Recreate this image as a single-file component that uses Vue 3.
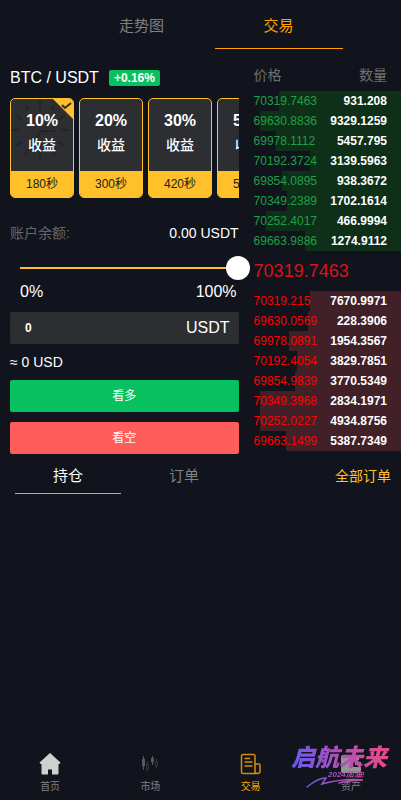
<template>
  <div class="page">
    <!-- Top tabs -->
    <nav class="top-tabs">
      <button
        v-for="tab in topTabs"
        :key="tab"
        class="top-tab"
        :class="{ active: tab === activeTop }"
        @click="activeTop = tab"
      >
        {{ tab }}
      </button>
    </nav>

    <main class="trade">
      <!-- Order form -->
      <section class="order">
        <div class="pair">
          <h1 class="pair-name">BTC / USDT</h1>
          <span class="change">+0.16%</span>
        </div>

        <div class="periods">
          <button
            v-for="(p, i) in periods"
            :key="p.rate"
            class="period"
            @click="activePeriod = i"
          >
            <svg v-if="i === activePeriod" class="clock" viewBox="0 0 62 72" aria-hidden="true">
              <path
                d="M29 2v8M29 52v9M1 31h6M51 31h7M6 17l4 3M6 46l5-3M15 7l2 4M14 55l3-5M43 7l-2 4M44 55l-3-5M53 17l-4 3M53 46l-5-3M43 32H30L23 43"
                fill="none"
                stroke="#232428"
                stroke-width="2"
                stroke-linecap="round"
              />
            </svg>
            <svg v-if="i === activePeriod" class="tick" viewBox="0 0 20 20" aria-hidden="true">
              <path d="M0 0h20v20z" fill="#ffc029" />
              <path d="M9 6l3 3 6-5" fill="none" stroke="#2d2e32" stroke-width="2" />
            </svg>
            <strong class="rate">{{ p.rate }}</strong>
            <span class="gain">收益</span>
            <span class="seconds">{{ p.seconds }}秒</span>
          </button>
        </div>

        <div class="balance">
          <span class="muted">账户余额:</span>
          <span>0.00 USDT</span>
        </div>

        <input v-model="percent" class="slider" type="range" min="0" max="100" aria-label="仓位比例" />
        <div class="scale">
          <span>0%</span>
          <span>100%</span>
        </div>

        <label class="amount">
          <input v-model="amount" class="amount-input" type="text" inputmode="decimal" />
          <span>USDT</span>
        </label>
        <p class="approx">≈ {{ amount }} USD</p>

        <button class="btn up">看多</button>
        <button class="btn down">看空</button>
      </section>

      <!-- Order book -->
      <section class="book">
        <table class="book-table">
          <thead>
            <tr class="book-head">
              <th>价格</th>
              <th>数量</th>
            </tr>
          </thead>
          <tbody class="bids">
            <tr v-for="row in bids" :key="row.price" class="book-row">
              <td class="price">{{ row.price }}</td>
              <td class="qty">
                {{ row.qty }}
                <span class="depth" :style="{ width: row.depth + '%' }"></span>
              </td>
            </tr>
          </tbody>
          <tbody>
            <tr class="last-price">
              <td colspan="2">70319.7463</td>
            </tr>
          </tbody>
          <tbody class="asks">
            <tr v-for="row in asks" :key="row.price" class="book-row">
              <td class="price">{{ row.price }}</td>
              <td class="qty">
                {{ row.qty }}
                <span class="depth" :style="{ width: row.depth + '%' }"></span>
              </td>
            </tr>
          </tbody>
        </table>
      </section>
    </main>

    <!-- Positions / orders -->
    <div class="list-tabs">
      <button
        v-for="tab in listTabs"
        :key="tab"
        class="list-tab"
        :class="{ active: tab === activeList }"
        @click="activeList = tab"
      >
        {{ tab }}
      </button>
      <a href="#" class="all-orders">全部订单</a>
    </div>

    <!-- Bottom nav -->
    <nav class="tabbar">
      <a href="#" class="tabbar-item">
        <svg viewBox="0 0 24 24" aria-hidden="true">
          <path
            d="M12 1l-10.500 9.500 1 1.500h1v9.500q0 1 1 1h5.500v-5h4v5h5.500q1 0 1-1v-9.500h1l1-1.500z"
            fill="#d0d0d0"
          />
        </svg>
        <span>首页</span>
      </a>
      <a href="#" class="tabbar-item">
        <svg viewBox="0 0 24 24" aria-hidden="true">
          <g stroke="#55585c" fill="#55585c">
            <path d="M5.500 4v14M14.500 4v9" />
            <path d="M4.500 7h2v7h-2zM13.500 6h2v4h-2z" />
          </g>
          <path d="M9.500 9v3M8.500 12h2v5h-2zM9.500 17v2M18.500 7v3M17.500 10h2v4h-2zM18.500 14v2" fill="none" stroke="#34373d" />
        </svg>
        <span>市场</span>
      </a>
      <a href="#" class="tabbar-item active">
        <svg viewBox="0 0 24 24" aria-hidden="true">
          <path
            d="M16 21.500H4q-1.500 0-1.500-1.500V4q0-1.500 1.500-1.500h10.500q1.500 0 1.500 1.500v15.500q0 2 2.500 2t2.500-2v-6.500q0-1-1-1h-4M6 6.500h4.500M6 10h7M6 14h7M15 21.500h3.500"
            fill="none"
            stroke="#d28c0c"
            stroke-width="1.500"
            stroke-linecap="round"
          />
        </svg>
        <span>交易</span>
      </a>
      <a href="#" class="tabbar-item">
        <svg viewBox="0 0 24 24" aria-hidden="true">
          <path
            d="M4 3h14q2 0 2 2v3h-4q-3 0-3 3.500t3 3.500h6v4q0 2-2 2H4q-2 0-2-2V5q0-2 2-2zM16 10h6v3h-6z"
            fill="#969696"
          />
        </svg>
        <span>资产</span>
      </a>
    </nav>

    <!-- Campaign watermark -->
    <svg class="stamp" viewBox="0 0 104 58" aria-hidden="true">
      <defs>
        <linearGradient id="ink" gradientUnits="userSpaceOnUse" x1="0" y1="40" x2="104" y2="16">
          <stop offset="0" stop-color="#5a5cf4" />
          <stop offset="0.500" stop-color="#b050b8" />
          <stop offset="1" stop-color="#f04a80" />
        </linearGradient>
      </defs>
      <path
        d="M18 52q11-9 19-9l-4 6q22-6 41-4-11 0-24 3"
        fill="none"
        stroke="url(#ink)"
        stroke-width="1.500"
        stroke-linecap="round"
      />
      <text class="stamp-title" x="2" y="31" fill="url(#ink)">启航未来</text>
      <text class="stamp-text" x="39" y="42" fill="url(#ink)">2024加油!</text>
    </svg>
  </div>
</template>

<script setup>
import { ref } from "vue";

const topTabs = ["走势图", "交易"];
const activeTop = ref("交易");

const listTabs = ["持仓", "订单"];
const activeList = ref("持仓");

const periods = [
  { rate: "10%", seconds: 180 },
  { rate: "20%", seconds: 300 },
  { rate: "30%", seconds: 420 },
  { rate: "50%", seconds: 540 },
];
const activePeriod = ref(0);

const percent = ref(100);
const amount = ref("0");

const bids = [
  { price: "70319.7463", qty: "931.208", depth: 76 },
  { price: "69630.8836", qty: "9329.1259", depth: 88 },
  { price: "69978.1112", qty: "5457.795", depth: 78 },
  { price: "70192.3724", qty: "3139.5963", depth: 57 },
  { price: "69854.0895", qty: "938.3672", depth: 74 },
  { price: "70349.2389", qty: "1702.1614", depth: 71 },
  { price: "70252.4017", qty: "466.9994", depth: 84 },
  { price: "69663.9886", qty: "1274.9112", depth: 60 },
];

const asks = [
  { price: "70319.215", qty: "7670.9971", depth: 57 },
  { price: "69630.0569", qty: "228.3906", depth: 58 },
  { price: "69978.0891", qty: "1954.3567", depth: 70 },
  { price: "70192.4054", qty: "3829.7851", depth: 65 },
  { price: "69854.9839", qty: "3770.5349", depth: 66 },
  { price: "70349.3968", qty: "2834.1971", depth: 88 },
  { price: "70252.0227", qty: "4934.8756", depth: 88 },
  { price: "69663.1499", qty: "5387.7349", depth: 72 },
];
</script>

<style>
body {
  background: #11141d;
}
</style>

<style scoped>
.page {
  min-height: 100vh;
  box-sizing: border-box;
  padding-bottom: 60px;
  background: #11141d;
  color: #fff;
  font-family: "Liberation Sans", "Noto Sans CJK SC", sans-serif;
  font-size: 14px;
  line-height: 20px;
}

button {
  font-family: inherit;
  border: none;
  padding: 0;
  background: none;
  color: inherit;
  cursor: pointer;
}

a {
  text-decoration: none;
}

/* Top tabs */
.top-tabs {
  display: flex;
  justify-content: center;
  gap: 9px;
  padding: 0 58px 0 77px;
}
.top-tab {
  flex: 0 1 128px;
  height: 49px;
  font-size: 15px;
  color: #808080;
  border-bottom: 1px solid transparent;
}
.top-tab.active {
  color: #ffa500;
  border-color: #ffa500;
}

/* Trade area */
.trade {
  display: flex;
  padding-top: 16px;
}
.order {
  width: 60%;
  box-sizing: border-box;
  padding: 0 2px 0 10px;
}
.book {
  position: relative;
  z-index: 0;
  width: 40%;
}

.pair {
  display: flex;
  align-items: center;
  gap: 10px;
  height: 26px;
}
.pair-name {
  margin: 0;
  font-size: 16px;
  font-weight: 400;
}
.change {
  padding: 0 5px;
  border-radius: 2px;
  background: #07c160;
  font-size: 12px;
  font-weight: 700;
  line-height: 16px;
}

/* Period cards */
.periods {
  display: flex;
  gap: 5px;
  margin-top: 7px;
  overflow: hidden;
}
.period {
  position: relative;
  flex: 0 0 64px;
  height: 100px;
  box-sizing: border-box;
  display: flex;
  flex-direction: column;
  align-items: center;
  border: 1px solid #ffc029;
  border-radius: 5px;
  background: #2d2e32;
  overflow: hidden;
}
.clock {
  position: absolute;
  top: 0;
  left: 0;
  width: 62px;
  height: 72px;
}
.tick {
  position: absolute;
  top: 0;
  right: 0;
  width: 20px;
  height: 20px;
}
.rate {
  position: relative;
  margin-top: 9px;
  font-size: 16px;
  line-height: 25px;
}
.gain {
  position: relative;
  font-size: 14px;
  font-weight: 500;
  line-height: 25px;
}
.seconds {
  width: 100%;
  margin-top: auto;
  background: #ffc029;
  color: #222;
  font-size: 12px;
  line-height: 26px;
}

/* Balance and amount */
.balance {
  display: flex;
  justify-content: space-between;
  margin-top: 25px;
}
.muted {
  color: #666;
}
.slider {
  position: relative;
  z-index: 1;
  display: block;
  appearance: none;
  width: calc(100% + 13px);
  height: 24px;
  margin: 13px 0 0 -2px;
  background: linear-gradient(#ffc029, #ffc029) center / calc(100% - 24px) 2px no-repeat;
}
.slider::-webkit-slider-thumb {
  appearance: none;
  width: 24px;
  height: 24px;
  border-radius: 50%;
  background: #fff;
}
.scale {
  display: flex;
  justify-content: space-between;
  padding: 2px 2px 0 10px;
  font-size: 16px;
}
.amount {
  display: flex;
  align-items: center;
  height: 32px;
  margin-top: 10px;
  padding: 0 9px 0 15px;
  border-radius: 2px;
  background: #2d2e32;
  font-size: 16px;
}
.amount-input {
  flex: 1;
  min-width: 0;
  padding: 0;
  border: none;
  outline: none;
  background: none;
  color: #fff;
  font-family: inherit;
  font-size: 12px;
  font-weight: 700;
}
.approx {
  margin: 8px 0;
}
.btn {
  display: block;
  width: 100%;
  height: 32px;
  padding-bottom: 4px;
  border-radius: 2px;
  color: #fff;
  font-size: 12px;
}
.btn + .btn {
  margin-top: 10px;
}
.up {
  background: #07c160;
}
.down {
  background: #ff5c5c;
}

/* Order book */
.book-table {
  width: 100%;
  border-collapse: collapse;
  font-size: 12px;
}
.book-head th {
  height: 26px;
  padding: 0 14px 0 13px;
  color: #707070;
  font-size: 14px;
  font-weight: 400;
  line-height: 20px;
  text-align: left;
  vertical-align: top;
}
.book-head th:last-child {
  text-align: right;
}
.book-row {
  position: relative;
}
.book-row td {
  height: 20px;
  padding: 0 14px 0 13px;
}
.book-row .price {
  padding-right: 0;
}
.book-row .qty {
  padding-left: 0;
  font-weight: 700;
  text-align: right;
}
.depth {
  position: absolute;
  top: 0;
  right: 0;
  bottom: 0;
  z-index: -1;
}
.bids .price {
  color: #1fa045;
}
.bids .depth {
  background: #0f3018;
}
.asks .price {
  color: #f00;
}
.asks .depth {
  background: #422028;
}
.last-price td {
  height: 40px;
  padding: 0 13px;
  color: #d8131a;
  font-size: 18px;
}

/* Positions / orders */
.list-tabs {
  display: flex;
  align-items: center;
  gap: 10px;
  margin-top: 5px;
  padding: 0 10px 0 15px;
}
.list-tab {
  flex: 0 1 106px;
  height: 35px;
  padding-bottom: 4px;
  border-bottom: 1px solid transparent;
  color: #808080;
  font-size: 15px;
}
.list-tab.active {
  color: #fff;
  border-color: #ffa500;
}
.all-orders {
  margin-left: auto;
  padding-bottom: 2px;
  color: #ffc029;
}

/* Bottom nav */
.tabbar {
  position: fixed;
  left: 0;
  right: 0;
  bottom: 0;
  display: flex;
  height: 60px;
  box-sizing: border-box;
  border-top: 1px solid #0e1119;
  background: #11141d;
}
.tabbar-item {
  flex: 1;
  display: flex;
  flex-direction: column;
  align-items: center;
  padding-top: 11px;
  gap: 4px;
  color: #808080;
  font-size: 10px;
  line-height: 14px;
}
.tabbar-item.active {
  color: #ffa500;
}
.tabbar-item svg {
  width: 24px;
  height: 24px;
}

.stamp {
  position: fixed;
  right: 8px;
  bottom: 7px;
  width: 104px;
  height: 58px;
  pointer-events: none;
}
.stamp-title {
  font-size: 24px;
  font-style: italic;
  font-weight: 900;
}
.stamp-text {
  font-size: 8px;
  font-style: italic;
  font-weight: 700;
}
</style>
